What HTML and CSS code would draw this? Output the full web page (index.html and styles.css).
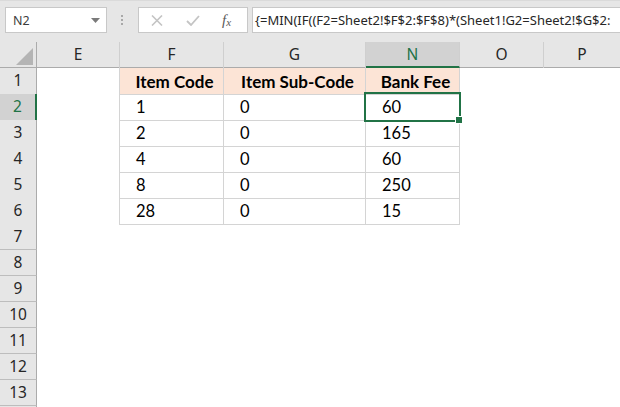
FILE: index.html
```html
<!DOCTYPE html>
<html>
<head>
<meta charset="utf-8">
<link rel="stylesheet" href="styles.css">
</head>
<body>
<div class="app">
  <div class="toolbar">
    <div class="namebox">
      <span class="name">N2</span>
      <svg class="caret" width="9" height="5" viewBox="0 0 9 5"><path d="M0 0H9L4.5 5Z" fill="#7a7a7a"/></svg>
    </div>
    <div class="grip"><i></i><i></i><i></i></div>
    <div class="fxbtns">
      <svg class="ico" width="12" height="11" viewBox="0 0 12 11"><path d="M1 0.5L11 10.5M11 0.5L1 10.5" stroke="#c4c4c4" stroke-width="1.6"/></svg>
      <svg class="ico" width="14" height="11" viewBox="0 0 14 11"><path d="M1 6L5 10L13 1" stroke="#c4c4c4" stroke-width="1.8" fill="none"/></svg>
      <span class="fx">f<sub>x</sub></span>
    </div>
    <div class="formula">{=MIN(IF((F2=Sheet2!$F$2:$F$8)*(Sheet1!G2=Sheet2!$G$2:</div>
  </div>

  <div class="sheet">
    <div class="row hrow">
      <div class="corner"><svg width="17" height="17" viewBox="0 0 17 17"><path d="M17 0V17H0Z" fill="#b4b4b4"/></svg></div>
      <div class="ch">E</div>
      <div class="ch">F</div>
      <div class="ch">G</div>
      <div class="ch sel">N</div>
      <div class="ch">O</div>
      <div class="ch last">P</div>
    </div>

    <div class="row">
      <div class="rh">1</div>
      <div class="c edge"></div>
      <div class="c t th">Item Code</div>
      <div class="c t th">Item Sub-Code</div>
      <div class="c t th">Bank Fee</div>
      <div class="c"></div>
      <div class="c"></div>
    </div>
    <div class="row">
      <div class="rh sel">2</div>
      <div class="c edge"></div>
      <div class="c t">1</div>
      <div class="c t">0</div>
      <div class="c t active">60<span class="handle"></span></div>
      <div class="c"></div>
      <div class="c"></div>
    </div>
    <div class="row">
      <div class="rh">3</div>
      <div class="c edge"></div>
      <div class="c t">2</div>
      <div class="c t">0</div>
      <div class="c t">165</div>
      <div class="c"></div>
      <div class="c"></div>
    </div>
    <div class="row">
      <div class="rh">4</div>
      <div class="c edge"></div>
      <div class="c t">4</div>
      <div class="c t">0</div>
      <div class="c t">60</div>
      <div class="c"></div>
      <div class="c"></div>
    </div>
    <div class="row">
      <div class="rh">5</div>
      <div class="c edge"></div>
      <div class="c t">8</div>
      <div class="c t">0</div>
      <div class="c t">250</div>
      <div class="c"></div>
      <div class="c"></div>
    </div>
    <div class="row">
      <div class="rh">6</div>
      <div class="c edge"></div>
      <div class="c t">28</div>
      <div class="c t">0</div>
      <div class="c t">15</div>
      <div class="c"></div>
      <div class="c"></div>
    </div>
    <div class="row"><div class="rh">7</div><div class="c"></div><div class="c"></div><div class="c"></div><div class="c"></div><div class="c"></div><div class="c"></div></div>
    <div class="row"><div class="rh">8</div><div class="c"></div><div class="c"></div><div class="c"></div><div class="c"></div><div class="c"></div><div class="c"></div></div>
    <div class="row"><div class="rh">9</div><div class="c"></div><div class="c"></div><div class="c"></div><div class="c"></div><div class="c"></div><div class="c"></div></div>
    <div class="row"><div class="rh">10</div><div class="c"></div><div class="c"></div><div class="c"></div><div class="c"></div><div class="c"></div><div class="c"></div></div>
    <div class="row"><div class="rh">11</div><div class="c"></div><div class="c"></div><div class="c"></div><div class="c"></div><div class="c"></div><div class="c"></div></div>
    <div class="row"><div class="rh">12</div><div class="c"></div><div class="c"></div><div class="c"></div><div class="c"></div><div class="c"></div><div class="c"></div></div>
    <div class="row"><div class="rh">13</div><div class="c"></div><div class="c"></div><div class="c"></div><div class="c"></div><div class="c"></div><div class="c"></div></div>
    <div class="row"><div class="rh"></div><div class="c"></div><div class="c"></div><div class="c"></div><div class="c"></div><div class="c"></div><div class="c"></div></div>
  </div>
</div>
</body>
</html>
```

FILE: styles.css
```css
* { box-sizing: border-box; }
html, body { margin: 0; padding: 0; }
body {
  width: 620px;
  height: 407px;
  overflow: hidden;
  background: #ffffff;
  font-family: "Noto Sans", sans-serif;
}
.app { width: 620px; height: 407px; overflow: hidden; }

/* toolbar */
.toolbar {
  height: 42px;
  background: #e6e6e6;
  border-top: 1px solid #dadada;
  display: flex;
  align-items: flex-start;
  padding-top: 6px;
  padding-left: 5px;
}
.namebox {
  width: 102px;
  height: 26px;
  background: #fff;
  border: 1px solid #c8c8c8;
  display: flex;
  align-items: center;
  justify-content: space-between;
  padding: 0 6px 0 7px;
}
.name { font-size: 12.5px; color: #3c3c3c; }
.caret { display: block; margin-top: 1px; }
.grip {
  width: 31px;
  height: 26px;
  display: flex;
  flex-direction: column;
  align-items: center;
  justify-content: center;
  gap: 2px;
  padding-right: 2px;
}
.grip i { display: block; width: 2px; height: 2px; background: #a8a8a8; }
.fxbtns {
  width: 110px;
  height: 26px;
  background: #fff;
  border: 1px solid #c8c8c8;
  display: flex;
  align-items: center;
  padding-left: 12px;
}
.fxbtns .ico { display: block; }
.fxbtns .ico + .ico { margin-left: 23px; }
.fx {
  margin-left: 22px;
  font-family: "Liberation Serif", serif;
  font-style: italic;
  font-size: 15px;
  color: #5a5a5a;
  line-height: 1;
}
.fx sub { font-size: 11px; vertical-align: baseline; position: relative; top: 1px; }
.formula {
  flex: 1;
  margin-left: 4px;
  height: 26px;
  background: #fff;
  border: 1px solid #c8c8c8;
  border-right: none;
  font-size: 13px;
  color: #262626;
  line-height: 24px;
  padding-left: 2px;
  white-space: nowrap;
  overflow: hidden;
}

/* sheet */
.row {
  display: grid;
  grid-template-columns: 37px 83px 104px 142px 94px 84px 1fr;
  height: 26px;
}
.hrow { background: #e6e6e6; border-bottom: 1px solid #ababab; }
.corner {
  border-right: 1px solid #ababab;
  display: flex;
  align-items: flex-end;
  justify-content: flex-end;
  padding: 0 3px 3px 0;
}
.corner svg { display: block; }
.ch {
  border-right: 1px solid #cfcfcf;
  text-align: center;
  font-size: 15.5px;
  line-height: 25px;
  color: #262626;
}
.ch.last { border-right: none; }
.ch.sel {
  background: #d2d2d2;
  color: #217346;
  border-bottom: 2px solid #217346;
  line-height: 24px;
}
.rh {
  background: #e6e6e6;
  border-right: 1px solid #ababab;
  border-bottom: 1px solid #bdbdbd;
  text-align: center;
  font-size: 15.5px;
  line-height: 25px;
  color: #262626;
}
.rh.sel {
  background: #d2d2d2;
  color: #217346;
  border-right: 2px solid #217346;
}
.c {
  font-family: Lato, "Noto Sans", sans-serif;
  font-size: 16.5px;
  line-height: 25px;
  padding-top: 1px;
  color: #000;
  white-space: nowrap;
}
.edge { border-right: 1px solid #d4d4d4; }
.t {
  border-right: 1px solid #d4d4d4;
  border-bottom: 1px solid #d4d4d4;
  padding-left: 16px;
}
.th {
  background: #fce4d6;
  font-weight: bold;
  font-size: 17px;
  text-align: center;
  padding-left: 6px;
}
.active { position: relative; }
.active::after {
  content: "";
  position: absolute;
  top: -2px;
  left: -2px;
  right: -2px;
  bottom: -2px;
  border: 2px solid #217346;
}
.handle {
  position: absolute;
  right: -4px;
  bottom: -4px;
  width: 8px;
  height: 8px;
  background: #217346;
  border: 1px solid #fff;
  z-index: 2;
}
```
